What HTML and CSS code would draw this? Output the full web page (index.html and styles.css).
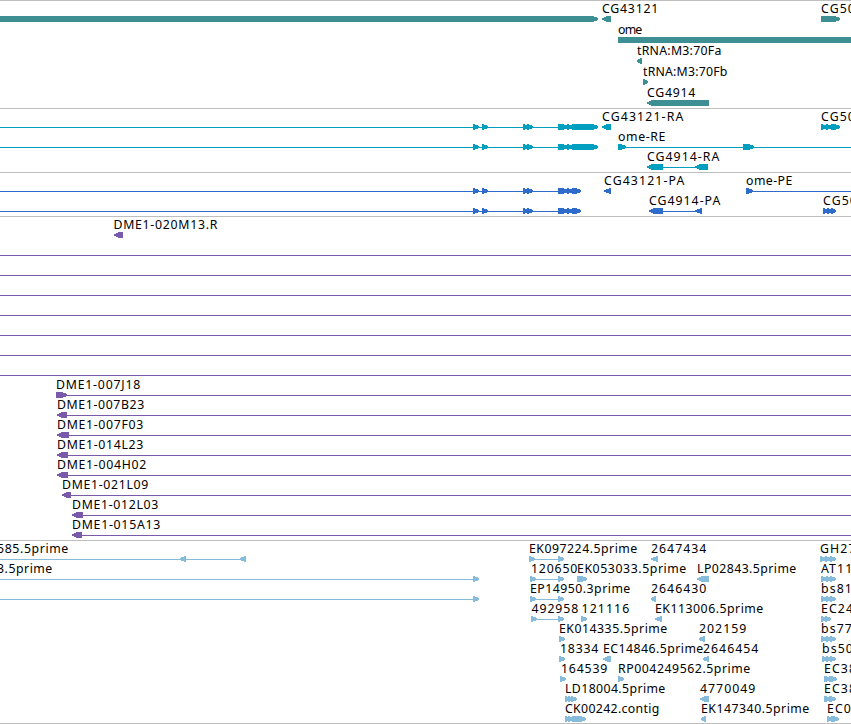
FILE: index.html
```
<!DOCTYPE html>
<html lang="en">
<head>
  <meta charset="UTF-8" />
  <title>Genome Browser</title>
  <link rel="stylesheet" href="styles.css">
</head>
<body>
  <main class="browser">
    <section class="track gene" id="gene"></section>
    <section class="track transcript" id="transcript"></section>
    <section class="track cds" id="cds"></section>
    <section class="track bac" id="bac"></section>
    <section class="track est" id="est"></section>
  </main>
  <script src="script.js"></script>
</body>
</html>
```
FILE: styles.css
```
body {
  margin: 0;
  background-color: #fff;
  color: #000;
  overflow: hidden;
}

.browser {
  display: flex;
  flex-direction: column;
  width: 851px;
  height: 724px;
}

.track {
  box-sizing: border-box;
  border-top: 1px solid #bebebe;
  overflow: hidden;
}

.track svg {
  display: block;
  width: 851px;
  height: 100%;
  fill: currentColor;
}

.gene {
  height: 108px;
  color: #3d8f94;
}

.transcript {
  height: 64px;
  color: #009ebf;
}

.cds {
  height: 44px;
  color: #2f6bcb;
}

.bac {
  height: 324px;
  color: #7859aa;
}

.est {
  height: 184px;
  color: #87bbdc;
  border-bottom: 1px solid #bebebe;
}

.label {
  font-family: "Noto Sans", sans-serif;
  font-size: 12.3px;
  fill: #000;
}

.clipped {
  letter-spacing: 1.1px;
}

.line,
.arrow {
  shape-rendering: crispEdges;
}
```
FILE: script.js
```
// label:  ['t', text, left, right]   (right is left out when cut by the edge)
// line:   ['l', left, right]
// arrows: ['r', left, right] and ['f', left, right] for forward / reverse
const exons = [['r', 473, 479], ['r', 482, 488], ['r', 523, 529], ['r', 527, 533], ['r', 558, 568]];
const mRNA = [['l', 0, 590], ...exons, ['r', 567, 573], ['r', 572, 598]];
const protein = [['l', 0, 575], ...exons, ['r', 567, 573], ['r', 572, 581]];

const gene = [
  [['r', -10, 598], ['t', 'CG43121', 602, 659], ['f', 602, 611], ['t', 'CG50', 821], ['r', 821, 840]],
  [['t', 'ome', 618, 643], ['r', 618, 870]],
  [['t', 'tRNA:M3:70Fa', 637, 722], ['f', 637, 642]],
  [['t', 'tRNA:M3:70Fb', 643, 728], ['r', 643, 648]],
  [['t', 'CG4914', 647, 696], ['f', 647, 709]]
];

const transcript = [
  [...mRNA, ['t', 'CG43121-RA', 602, 684], ['f', 602, 611], ['t', 'CG50', 821], ['l', 821, 838], ['r', 821, 827], ['r', 826, 832], ['r', 831, 840]],
  [...mRNA, ['t', 'ome-RE', 618, 666], ['l', 618, 851], ['r', 618, 626], ['r', 743, 754]],
  [['t', 'CG4914-RA', 647, 720], ['l', 647, 708], ['f', 647, 663], ['f', 695, 708]]
];

const cds = [
  [...protein, ['t', 'CG43121-PA', 604, 685], ['f', 604, 611], ['t', 'ome-PE', 746, 793], ['l', 746, 851], ['r', 746, 753]],
  [...protein, ['t', 'CG4914-PA', 649, 721], ['l', 649, 702], ['f', 649, 663], ['f', 695, 702], ['t', 'CG50', 823], ['r', 823, 828], ['r', 827, 832], ['r', 831, 836]]
];

const full = [['l', 0, 851]];
const bac = [
  [['t', 'DME1-020M13.R', 113.5, 218], ['f', 114, 123]],
  full, full, full, full, full, full, full,
  [['t', 'DME1-007J18', 56, 141], ['l', 57, 851], ['r', 56, 67]],
  [['t', 'DME1-007B23', 57, 145], ['l', 58, 851], ['f', 57, 67]],
  [['t', 'DME1-007F03', 57, 144], ['l', 58, 851], ['f', 57, 69]],
  [['t', 'DME1-014L23', 57, 144], ['l', 58, 851], ['f', 57, 68]],
  [['t', 'DME1-004H02', 57, 147], ['l', 58, 851], ['f', 57, 68]],
  [['t', 'DME1-021L09', 62, 149], ['l', 63, 851], ['f', 62, 71]],
  [['t', 'DME1-012L03', 72, 159], ['l', 73, 851], ['f', 72, 83]],
  [['t', 'DME1-015A13', 72, 161], ['l', 73, 851], ['f', 72, 82]]
];

const est = [
  [['t', '585.5prime', -3, 69], ['l', 0, 244], ['f', 180, 186], ['f', 240, 246],
    ['t', 'EK097224.5prime', 529, 638], ['l', 529, 562], ['r', 529, 535], ['r', 558, 564],
    ['t', '2647434', 651, 707], ['f', 651, 658], ['t', 'GH27', 820], ['r', 820, 826], ['r', 825, 831], ['r', 830, 836]],
  [['t', '3.5prime', -3, 53], ['l', 0, 478], ['r', 473, 479],
    ['t', '120650', 531, 578], ['l', 530, 562], ['r', 530, 536], ['r', 558, 564],
    ['t', 'EK053033.5prime', 577, 687], ['r', 577, 587], ['t', 'LP02843.5prime', 697, 797], ['f', 697, 709],
    ['t', 'AT11', 821], ['r', 821, 827], ['r', 826, 832], ['r', 830, 836]],
  [['l', 0, 478], ['r', 473, 479], ['t', 'EP14950.3prime', 530, 631], ['l', 530, 562], ['r', 530, 536], ['r', 558, 564],
    ['t', '2646430', 651, 707], ['f', 651, 656], ['t', 'bs81', 821], ['r', 821, 827], ['r', 826, 832], ['r', 830, 836]],
  [['t', '492958', 531.5, 579], ['l', 531, 562], ['r', 531, 537], ['r', 558, 564], ['t', '121116', 581.5, 630], ['r', 581, 587],
    ['t', 'EK113006.5prime', 655, 764], ['f', 655, 662], ['t', 'EC24', 821], ['r', 821, 827], ['r', 825, 831]],
  [['t', 'EK014335.5prime', 559, 668], ['r', 559, 565], ['t', '202159', 699, 747], ['f', 699, 705],
    ['t', 'bs77', 821], ['r', 821, 827], ['r', 826, 832], ['r', 830, 836]],
  [['t', '18334', 560, 599], ['r', 559, 565], ['t', 'EC14846.5prime', 603, 704], ['f', 603, 611],
    ['t', '2646454', 703, 759], ['f', 703, 709], ['t', 'bs50', 822], ['r', 822, 828], ['r', 826, 832], ['r', 830, 836]],
  [['t', '164539', 561, 608], ['r', 560, 566], ['t', 'RP004249562.5prime', 618, 751], ['r', 618, 624],
    ['t', 'EC38', 824], ['r', 824, 831], ['r', 829, 837]],
  [['t', 'LD18004.5prime', 565, 666], ['r', 565, 571], ['r', 568, 574], ['r', 571, 577], ['t', '4770049', 700, 756], ['f', 700, 709],
    ['t', 'EC38', 824], ['r', 824, 831], ['r', 829, 836]],
  [['t', 'CK00242.contig', 565, 660], ['r', 565, 571], ['r', 568, 574], ['r', 572, 586], ['t', 'EK147340.5prime', 701, 810], ['f', 701, 706],
    ['t', 'EC0', 827], ['r', 827, 833], ['r', 831, 839]]
];

function arrow(kind, a, b) {
  const tip = kind === 'r' ? b : a;
  const tail = kind === 'r' ? a : b;
  const d = kind === 'r' ? -1 : 1;
  const w = b - a;
  if (w < 8) {
    return `<path class="arrow" d="M${tail} -3H${tail - d}L${tip} -1V1L${tail - d} 3H${tail}Z"/>`;
  }
  const n = tip + d * 5;
  const m = tip + d * 3;
  return `<path class="arrow" d="M${tail} -3H${n}L${m} -2L${tip} -1V1L${m} 2L${n} 3H${tail}Z"/>`;
}

function draw(item) {
  const [kind, a, b, c] = item;
  if (kind === 't') {
    return c === undefined
      ? `<text class="label clipped" x="${b}" y="-6">${a}</text>`
      : `<text class="label" x="${b}" y="-6" textLength="${c - b - 0.7}">${a}</text>`;
  }
  if (kind === 'l') {
    return `<rect class="line" x="${a}" y="0" width="${b - a}" height="1"/>`;
  }
  return arrow(kind, a, b);
}

function drawTrack(id, rows, pitch) {
  const body = rows.map((row, i) =>
    `<g transform="translate(0 ${18 + i * pitch})">${row.map(draw).join('')}</g>`).join('');
  document.getElementById(id).innerHTML = `<svg>${body}</svg>`;
}

drawTrack('gene', gene, 21);
drawTrack('transcript', transcript, 20);
drawTrack('cds', cds, 20);
drawTrack('bac', bac, 20);
drawTrack('est', est, 20);
```
